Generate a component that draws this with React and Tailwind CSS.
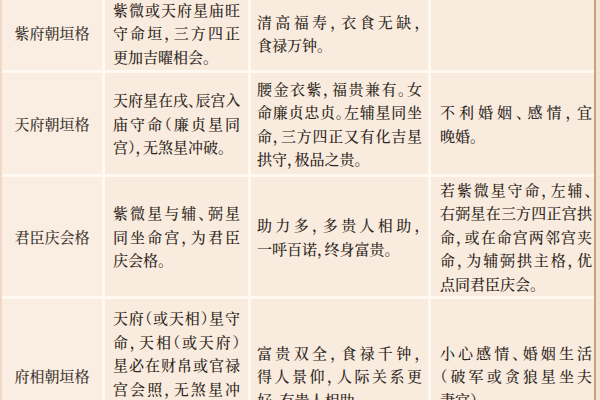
import React from 'react';

const rows = [
  {
    name: '紫府朝垣格',
    cells: [
      ['紫微或天府星庙旺', '守命垣，三方四正', '更加吉曜相会。'],
      ['清高福寿，衣食无缺，', '食禄万钟。'],
      [],
    ],
  },
  {
    name: '天府朝垣格',
    cells: [
      ['天府星在戌、辰宫入', '庙守命（廉贞星同', '宫），无煞星冲破。'],
      ['腰金衣紫，福贵兼有。女', '命廉贞忠贞。左辅星同坐', '命，三方四正又有化吉星', '拱守，极品之贵。'],
      ['不利婚姻、感情，宜', '晚婚。'],
    ],
  },
  {
    name: '君臣庆会格',
    cells: [
      ['紫微星与辅、弼星', '同坐命宫，为君臣', '庆会格。'],
      ['助力多，多贵人相助，', '一呼百诺，终身富贵。'],
      ['若紫微星守命，左辅、', '右弼星在三方四正宫拱', '命，或在命宫两邻宫夹', '命，为辅弼拱主格，优', '点同君臣庆会。'],
    ],
  },
  {
    name: '府相朝垣格',
    top: true,
    cells: [
      ['天府（或天相）星守', '命，天相（或天府）', '星必在财帛或官禄', '宫会照，无煞星冲', '破。'],
      ['富贵双全，食禄千钟，', '得人景仰，人际关系更', '好，有贵人相助。'],
      ['小心感情、婚姻生活', '（破军或贪狼星坐夫', '妻宫）。'],
    ],
  },
];

// padding per text column, read off the photo
const pads = ['pl-[8px] pr-[8px]', 'pl-[6px] pr-[6px]', 'pl-[9px] pr-[2px]'];

const Lines = ({ lines }) => (
  <>
    {lines.map((line, i) => (
      <div
        key={i}
        className={
          i < lines.length - 1
            ? 'whitespace-nowrap text-justify [text-align-last:justify]'
            : 'whitespace-nowrap'
        }
      >
        {line}
      </div>
    ))}
  </>
);

const App = () => {
  return (
    <div className="w-[600px] h-[400px] overflow-hidden bg-[#f4e3d3]">
      <div
        className="w-[596px] -mt-[4px] grid grid-cols-[100px_143px_177px_163px] grid-rows-[74px_101px_119px_154px] gap-[3px] bg-[#fff9f2] border-l-2 border-l-[#f0d9c6] border-r-2 border-r-[#c9a17c] text-[15px] leading-[23.5px] font-medium text-[#2e2621] [font-family:'Noto_Serif_CJK_SC','Noto_Sans_CJK_SC',serif] [font-feature-settings:'halt']"
      >
        {rows.map((row) => (
          <React.Fragment key={row.name}>
            <div className="bg-[#faeee3] flex items-center justify-center text-[#40362f]">
              {row.name}
            </div>
            {row.cells.map((lines, c) => (
              <div
                key={c}
                className={
                  'bg-[#f9ecdf] flex flex-col ' +
                  (row.top && c === 0 ? 'justify-start pt-[7px] ' : 'justify-center ') +
                  pads[c]
                }
              >
                <Lines lines={lines} />
              </div>
            ))}
          </React.Fragment>
        ))}
      </div>
    </div>
  );
};

export default App;
